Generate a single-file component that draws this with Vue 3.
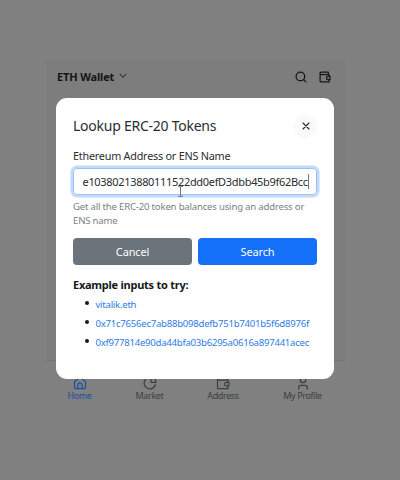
<script setup>
const address = 'e10380213880111522dd0efD3dbb45b9f62Bcc'
const examples = [
  'vitalik.eth',
  '0x71c7656ec7ab88b098defb751b7401b5f6d8976f',
  '0xf977814e90da44bfa03b6295a0616a897441acec',
]
</script>

<template>
  <main class="page">
    <section class="wallet">
      <header class="topbar">
        <span class="brand">ETH Wallet</span>
        <svg class="chevron" viewBox="0 0 8 6"><path d="M1 1.2 4 4.3 7 1.2" /></svg>
        <svg class="tool search" viewBox="0 0 12 12"><circle cx="5.4" cy="5.4" r="4.3" /><path d="m8.6 8.6 2.3 2.3" /></svg>
        <svg class="tool" viewBox="0 0 12 12"><path d="M9.3 3.5V1.2H2.2a1.1 1.1 0 0 0 0 2.3h8v1.8M1.1 2.3v7.6c0 .6.4 1 1 1h8.1V8.6M11 5.3H9a1.6 1.6 0 0 0 0 3.2h2z" /></svg>
      </header>
      <nav class="tabs">
        <a class="tab active">
          <svg viewBox="0 0 14 14"><path d="M1.5 5.5 7 1.3l5.5 4.2v5.8c0 .9-.6 1.4-1.4 1.4H2.9c-.8 0-1.4-.5-1.4-1.4zM4.9 12.5V8.9a2.1 2.1 0 0 1 4.2 0v3.6" /></svg>
          <span>Home</span>
        </a>
        <a class="tab market">
          <svg viewBox="0 0 14 14"><path d="M5.2 1.5a5.8 5.8 0 1 0 7.3 7.3M8 1.2v5.2h5A5.5 5.5 0 0 0 8 1.2z" /></svg>
          <span>Market</span>
        </a>
        <a class="tab address">
          <svg viewBox="0 0 14 14"><path d="M11 4V1.5H2.8a1.2 1.2 0 0 0 0 2.5H12v2.2M1.5 2.8v8.9c0 .6.4 1 1 1H12V9.8M12.8 6.4h-2.5a1.7 1.7 0 0 0 0 3.4h2.5z" /></svg>
          <span>Address</span>
        </a>
        <a class="tab profile">
          <svg viewBox="0 0 14 14"><circle cx="7" cy="4" r="2.7" /><path d="M2.7 13v-1.5c0-1.3 1-2.2 2.2-2.2h4.2c1.2 0 2.2.9 2.2 2.2V13" /></svg>
          <span>My Profile</span>
        </a>
      </nav>
    </section>

    <section class="modal" role="dialog">
      <div class="heading">
        <h1>Lookup ERC-20 Tokens</h1>
        <button class="close"><svg viewBox="0 0 8 8"><path d="m1 1 6 6M7 1 1 7" /></svg></button>
      </div>
      <label>Ethereum Address or ENS Name</label>
      <div class="field">
        <span class="value">{{ address }}</span><i class="caret"></i>
        <svg class="pointer" viewBox="0 0 5 11"><path d="M.5.5h1.3l.7.6.7-.6h1.3M2.5 1v9M.5 10.5h1.3l.7-.6.7.6h1.3" /></svg>
      </div>
      <p class="hint">Get all the ERC-20 token balances using an address or<br>ENS name</p>
      <div class="actions">
        <button class="cancel">Cancel</button>
        <button class="submit">Search</button>
      </div>
      <h2>Example inputs to try:</h2>
      <ul>
        <li v-for="item in examples" :key="item"><a>{{ item }}</a></li>
      </ul>
    </section>
  </main>
</template>

<style>
body { margin: 0; background: #808080; }
</style>

<style scoped>
* { box-sizing: border-box; }
.page {
  position: relative;
  width: 400px;
  height: 480px;
  padding: 60px 55px 0 46px;
  background: #808080;
  font-family: "Noto Sans", "Open Sans", sans-serif;
  color: #292d31;
  white-space: nowrap;
  overflow: hidden;
}
svg { display: block; fill: none; stroke: currentColor; stroke-width: 1.25; stroke-linejoin: round; stroke-linecap: round; }
button { border: 0; padding: 0; font: inherit; }
.wallet { height: 345px; display: flex; flex-direction: column; justify-content: space-between; background: #7d7d7d; }
.topbar { display: flex; align-items: center; height: 34px; padding: 0 14px 0 11px; color: #141516; }
.brand { margin-top: -2px; font-size: 11px; font-weight: 700; letter-spacing: -.15px; }
.chevron { width: 8px; height: 6px; margin: -2px auto 0 5px; stroke-width: 1; }
.tool { width: 12px; height: 12px; }
.search { margin-right: 12px; }
.tabs { display: flex; height: 45px; border-top: 1px solid #757575; background: #808080; color: #3c3f42; padding-top: 15px; }
.tab { display: flex; flex-direction: column; align-items: center; width: 67px; font-size: 9px; line-height: 12px; letter-spacing: -.37px; }
.tab svg { width: 14px; height: 14px; }
.market { width: 73px; }
.address { width: 74px; }
.profile { width: 85px; }
.active { color: #1a4fa3; }
.modal { position: absolute; left: 56px; top: 98px; width: 278px; height: 280.5px; padding: 16px 17px; border-radius: 11px; background: #fff; }
.heading { display: flex; align-items: center; justify-content: space-between; height: 24px; }
h1 { margin: -2px 0 0; font-size: 14px; font-weight: 400; letter-spacing: -.25px; }
.close { display: grid; place-items: center; width: 23px; height: 23px; border-radius: 50%; background: #f8f9fa; color: #212529; }
.close svg { width: 8px; height: 8px; stroke-width: 1.1; }
label { display: block; height: 19px; margin-top: 9px; font-size: 10.8px; line-height: 18px; letter-spacing: -.22px; }
.field { position: relative; display: flex; align-items: center; height: 27px; margin-top: 2px; padding-left: 8.5px; border: 1px solid #9abffa; border-radius: 4px; box-shadow: 0 0 0 2.5px #c2dafe; }
.value { font-size: 11px; letter-spacing: -.32px; }
.caret { width: 1px; height: 15px; background: #777; }
.pointer { position: absolute; left: 104px; top: 17px; width: 5px; height: 11px; color: #555; stroke-width: .8; }
.hint { height: 31px; margin: 5px 0 0; font-size: 9.6px; line-height: 14.4px; letter-spacing: -.2px; color: #7b7f83; }
.actions { display: grid; grid-template-columns: 119px 119px; gap: 6px; margin-top: 7px; }
.actions button { height: 26.5px; border-radius: 4px; color: #fff; font-size: 11px; line-height: 28px; letter-spacing: -.15px; }
.cancel { background: #6b737b; }
.submit { background: #146ff9; }
h2 { height: 18px; margin: 11.5px 0 0; font-size: 11px; line-height: 18px; font-weight: 700; letter-spacing: -.25px; color: #16181a; }
ul { margin: 1px 0 0; padding: 0; list-style: none; }
li { display: flex; align-items: center; height: 19.2px; padding-left: 11.5px; font-size: 9.6px; color: #2f7ce2; letter-spacing: -.26px; }
li::before { content: ""; width: 4px; height: 4px; margin: -3px 7px 0 0; border-radius: 50%; background: #16181a; }
</style>
